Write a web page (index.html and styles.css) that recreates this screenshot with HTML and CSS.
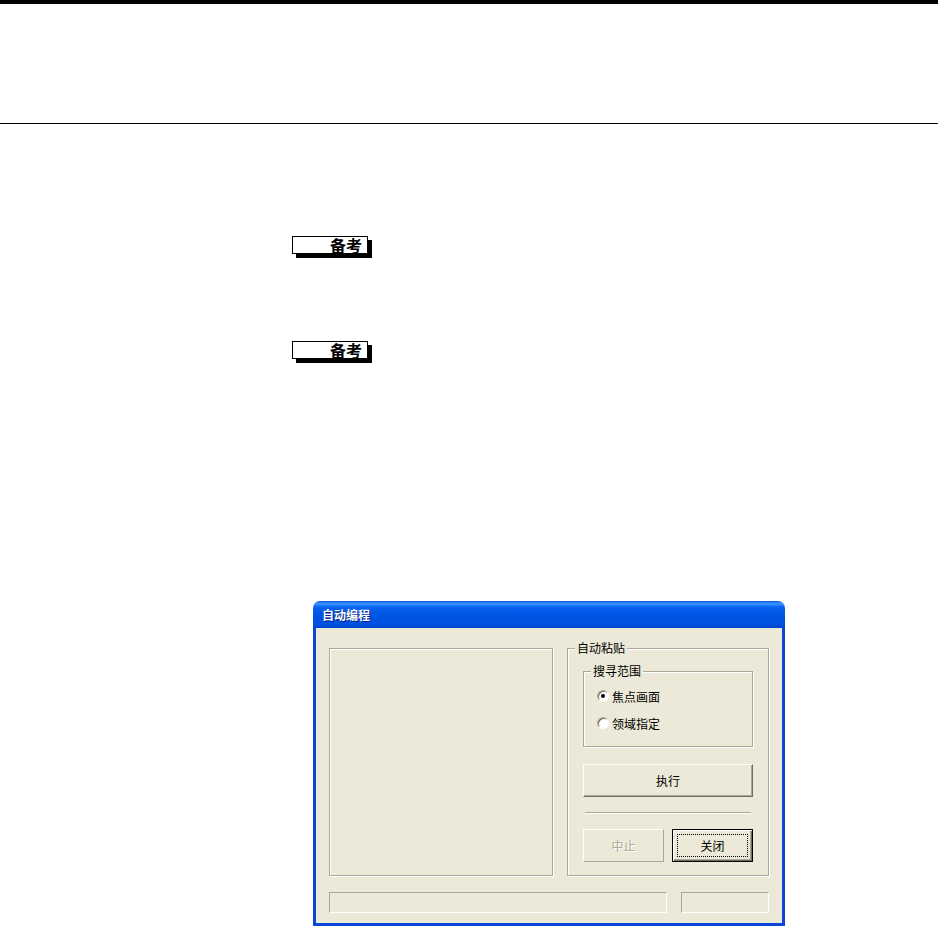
FILE: index.html
```html
<!DOCTYPE html>
<html lang="zh-CN">
<head>
    <meta charset="UTF-8">
    <meta name="viewport" content="width=device-width, initial-scale=1.0">
    <title>自动编程</title>
    <link rel="stylesheet" href="styles.css">
</head>
<body>
    <!-- page header rules -->
    <header class="page-head"></header>

    <main class="content">
        <div class="note"><span>备考</span></div>
        <div class="note note-second"><span>备考</span></div>

        <!-- dialog screenshot -->
        <div class="dialog">
            <div class="titlebar">自动编程</div>
            <div class="client">
                <div class="main-row">
                    <div class="panel"></div>
                    <div class="group group-outer">
                        <span class="group-label">自动粘贴</span>
                        <div class="group group-inner">
                            <span class="group-label">搜寻范围</span>
                            <label class="radio"><span class="radio-dot checked"></span>焦点画面</label>
                            <label class="radio"><span class="radio-dot"></span>领域指定</label>
                        </div>
                        <button class="btn btn-wide">执行</button>
                        <div class="separator"></div>
                        <div class="btn-row">
                            <button class="btn" disabled>中止</button>
                            <button class="btn btn-default">关闭</button>
                        </div>
                    </div>
                </div>
                <div class="status-row">
                    <div class="status status-main"></div>
                    <div class="status status-side"></div>
                </div>
            </div>
        </div>
    </main>
</body>
</html>
```

FILE: styles.css
```css
/* Page */
body {
    margin: 0;
    padding: 0;
    background-color: #fff;
    color: #000;
    font-family: "Noto Sans CJK SC", "Liberation Sans", sans-serif;
}

.page-head {
    border-top: 4px solid #000;
    border-bottom: 1px solid #000;
    height: 119px;
}

.content {
    padding-left: 292px;
}

/* note tags */
.note {
    box-sizing: border-box;
    width: 76px;
    height: 18px;
    margin-top: 112px;
    border: 1px solid #000;
    box-shadow: 4px 4px 0 #000;
    display: flex;
    align-items: center;
    justify-content: flex-end;
    padding-right: 5px;
    font-size: 16px;
    font-weight: bold;
    line-height: 1;
}

.note-second {
    margin-top: 87px;
}

/* Dialog */
.dialog {
    width: 472px;
    margin-top: 242px;
    margin-left: 21px;
    font-size: 12px;
}

.titlebar {
    height: 27px;
    line-height: 28px;
    padding-left: 9px;
    border-radius: 7px 7px 0 0;
    background: linear-gradient(to bottom, #0a5ae6 0%, #3d95ff 10%, #0a63f0 22%, #0055e5 50%, #0051e0 85%, #0045cf 100%);
    color: #fff;
    font-weight: bold;
    text-shadow: 1px 1px 0 #0a1f80;
}

.client {
    border: 3px solid #0a46dc;
    border-top: none;
    background-color: #ece9d8;
    padding: 20px 13px 10px 13px;
}

.main-row {
    display: flex;
    gap: 14px;
    height: 228px;
}

.panel {
    box-sizing: border-box;
    width: 224px;
    border: 1px solid #aca899;
    box-shadow: inset 1px 1px 0 #fff, 1px 1px 0 #fff;
}

.group {
    position: relative;
    box-sizing: border-box;
    border: 1px solid #aca899;
    box-shadow: inset 1px 1px 0 #fff, 1px 1px 0 #fff;
}

.group-label {
    position: absolute;
    top: -8px;
    left: 7px;
    padding: 0 2px;
    line-height: 14px;
    background-color: #ece9d8;
}

.group-outer {
    width: 202px;
    padding: 22px 15px 0 15px;
}

.group-inner {
    height: 76px;
    padding: 16px 0 0 13px;
}

.radio {
    display: flex;
    align-items: center;
    gap: 3px;
    height: 16px;
    margin-bottom: 11px;
}

.radio-dot {
    box-sizing: border-box;
    width: 12px;
    height: 12px;
    border-radius: 50%;
    border: 1px solid;
    border-color: #aca899 #fff #fff #aca899;
    background-color: #fff;
    box-shadow: inset 1px 1px 0 #716f64;
    position: relative;
}

.radio-dot.checked::after {
    content: "";
    position: absolute;
    left: 3px;
    top: 3px;
    width: 4px;
    height: 4px;
    border-radius: 50%;
    background-color: #000;
}

/* buttons */
.btn {
    box-sizing: border-box;
    height: 33px;
    width: 81px;
    margin: 0;
    padding: 0;
    font-family: inherit;
    font-size: 12px;
    color: #000;
    background-color: #ece9d8;
    border: 1px solid;
    border-color: #fff #716f64 #716f64 #fff;
    box-shadow: inset -1px -1px 0 #aca899;
    position: relative;
}

.btn-wide {
    display: block;
    width: 100%;
    margin-top: 17px;
}

.btn:disabled {
    color: #aca899;
    text-shadow: 1px 1px 0 #fff;
    border-color: #fff #aca899 #aca899 #fff;
    box-shadow: none;
}

.btn-default {
    border: 1px solid #000;
    box-shadow: inset 1px 1px 0 #fff, inset -1px -1px 0 #716f64, inset -2px -2px 0 #aca899;
}

.btn-default::after {
    content: "";
    position: absolute;
    top: 4px;
    left: 4px;
    right: 4px;
    bottom: 4px;
    border: 1px dotted #000;
}

.separator {
    height: 1px;
    margin: 15px 2px 0 2px;
    background-color: #aca899;
    box-shadow: 0 1px 0 #fff;
}

.btn-row {
    display: flex;
    gap: 8px;
    margin-top: 16px;
}

/* status bar */
.status-row {
    display: flex;
    gap: 14px;
    margin-top: 16px;
}

.status {
    box-sizing: border-box;
    height: 21px;
    border: 1px solid;
    border-color: #aca899 #fff #fff #aca899;
}

.status-main {
    width: 338px;
}

.status-side {
    width: 88px;
}
```
